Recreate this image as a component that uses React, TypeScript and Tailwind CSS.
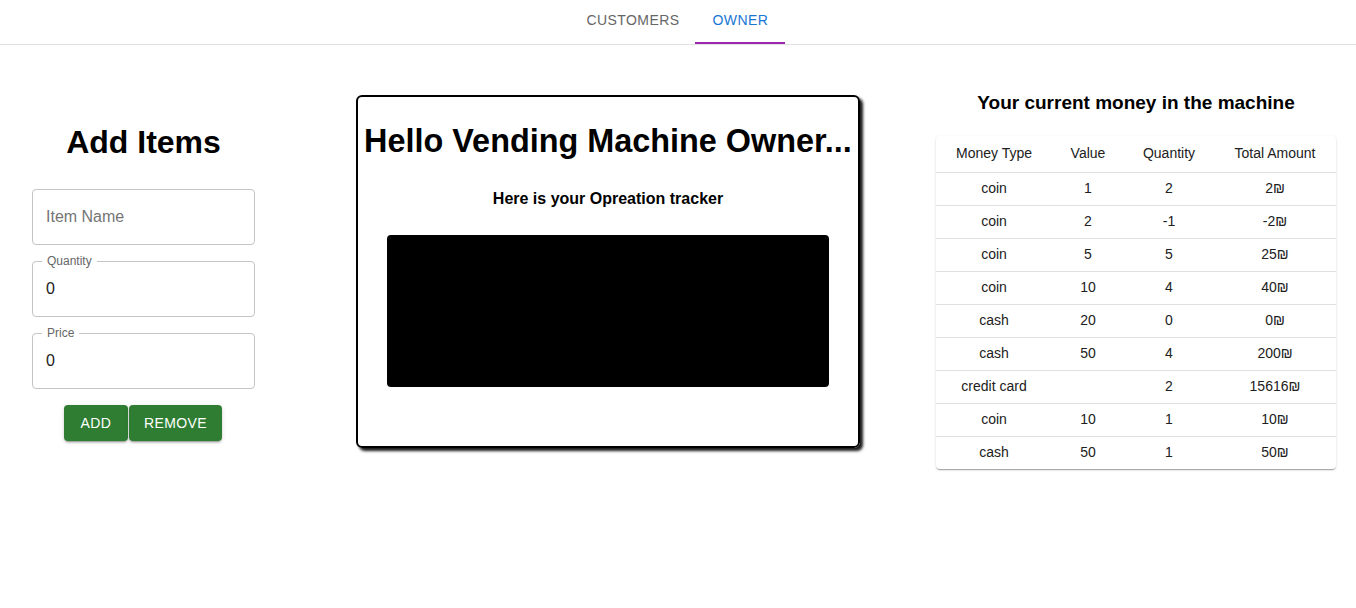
import React, { useState } from 'react';

type Tab = 'customers' | 'owner';

const money = [
    { type: 'coin', value: '1', qty: '2', total: '2₪' },
    { type: 'coin', value: '2', qty: '-1', total: '-2₪' },
    { type: 'coin', value: '5', qty: '5', total: '25₪' },
    { type: 'coin', value: '10', qty: '4', total: '40₪' },
    { type: 'cash', value: '20', qty: '0', total: '0₪' },
    { type: 'cash', value: '50', qty: '4', total: '200₪' },
    { type: 'credit card', value: '', qty: '2', total: '15616₪' },
    { type: 'coin', value: '10', qty: '1', total: '10₪' },
    { type: 'cash', value: '50', qty: '1', total: '50₪' },
];

function OutlinedField({ label, value, placeholder }: { label?: string; value?: string; placeholder?: string }) {
    return (
        <div className="relative h-[56px] w-[223px] rounded-[4px] border border-[#c4c4c4]">
            {label && (
                <span className="absolute left-[9px] top-[-8px] bg-white px-[5px] text-[12px] leading-[14px] text-[#666666]">
                    {label}
                </span>
            )}
            <input
                defaultValue={value}
                placeholder={placeholder}
                className="h-full w-full bg-transparent px-[13px] text-[16px] text-[#212121] placeholder-[#757575] outline-none"
            />
        </div>
    );
}

export default function App() {
    const [activeTab, setActiveTab] = useState<Tab>('owner');

    return (
        <div className="min-h-[608px] w-full bg-white font-['Liberation_Sans',Arial,sans-serif] text-black">
            {/* Tabs */}
            <div className="flex h-[45px] justify-center border-b border-[#e0e0e0]">
                <button
                    onClick={() => setActiveTab('customers')}
                    className={
                        activeTab === 'customers'
                            ? 'relative min-w-[90px] px-[16px] text-[14px] uppercase tracking-[0.4px] text-[#1976d2]'
                            : 'relative min-w-[90px] px-[16px] text-[14px] uppercase tracking-[0.4px] text-[#666666]'
                    }
                >
                    <span className="relative top-[-2px]">Customers</span>
                    {activeTab === 'customers' && <span className="absolute bottom-0 left-0 h-[2px] w-full bg-[#9c27b0]" />}
                </button>
                <button
                    onClick={() => setActiveTab('owner')}
                    className={
                        activeTab === 'owner'
                            ? 'relative min-w-[90px] px-[16px] text-[14px] uppercase tracking-[0.4px] text-[#1976d2]'
                            : 'relative min-w-[90px] px-[16px] text-[14px] uppercase tracking-[0.4px] text-[#666666]'
                    }
                >
                    <span className="relative top-[-2px]">Owner</span>
                    {activeTab === 'owner' && <span className="absolute bottom-0 left-0 h-[2px] w-full bg-[#9c27b0]" />}
                </button>
            </div>

            <div className="flex items-start pl-[32px]">
                {/* Add items */}
                <div className="mt-[79px] flex w-[223px] flex-col items-center">
                    <h1 className="text-[32px] font-bold leading-[37px]">Add Items</h1>
                    <div className="mt-[28px] flex flex-col gap-[16px]">
                        <OutlinedField placeholder="Item Name" />
                        <OutlinedField label="Quantity" value="0" />
                        <OutlinedField label="Price" value="0" />
                    </div>
                    <div className="mt-[16px] flex gap-[1px] pr-[1px]">
                        <button className="h-[36px] min-w-[64px] rounded-[4px] bg-[#2e7d32] px-[16px] text-[14px] font-medium uppercase tracking-[0.4px] text-white shadow-[0_3px_1px_-2px_rgba(0,0,0,0.2),0_2px_2px_0_rgba(0,0,0,0.14),0_1px_5px_0_rgba(0,0,0,0.12)]">
                            Add
                        </button>
                        <button className="h-[36px] min-w-[64px] rounded-[4px] bg-[#2e7d32] px-[15px] text-[14px] font-medium uppercase tracking-[0.4px] text-white shadow-[0_3px_1px_-2px_rgba(0,0,0,0.2),0_2px_2px_0_rgba(0,0,0,0.14),0_1px_5px_0_rgba(0,0,0,0.12)]">
                            Remove
                        </button>
                    </div>
                </div>

                {/* Operation tracker */}
                <div className="ml-[101px] mt-[50px] flex h-[353px] w-[504px] flex-col items-center rounded-[6px] border-2 border-black shadow-[3px_3px_3px_rgba(0,0,0,0.9)]">
                    <h1 className="mt-[26px] whitespace-nowrap text-[32.4px] font-bold leading-[37px]">Hello Vending Machine Owner...</h1>
                    <h4 className="mt-[29px] text-[16px] font-bold leading-[19px]">Here is your Opreation tracker</h4>
                    <div className="mt-[27px] h-[152px] w-[442px] rounded-[4px] bg-black" />
                </div>

                {/* Money table */}
                <div className="ml-[76px] mt-[46px] flex w-[400px] flex-col items-center">
                    <h3 className="text-[19px] font-bold leading-[23px]">Your current money in the machine</h3>
                    <div className="mt-[22px] w-full overflow-hidden rounded-[4px] bg-white shadow-[0_2px_1px_-1px_rgba(0,0,0,0.2),0_1px_1px_0_rgba(0,0,0,0.14),0_1px_3px_0_rgba(0,0,0,0.12)]">
                        <table className="w-full table-fixed border-collapse text-[14px] text-[#212121]">
                            <colgroup>
                                <col className="w-[116px]" />
                                <col className="w-[72px]" />
                                <col className="w-[90px]" />
                                <col className="w-[122px]" />
                            </colgroup>
                            <thead>
                                <tr className="h-[36px] border-b border-[#e0e0e0]">
                                    <th className="px-[4px] text-center font-normal">Money Type</th>
                                    <th className="px-[4px] text-center font-normal">Value</th>
                                    <th className="px-[4px] text-center font-normal">Quantity</th>
                                    <th className="px-[4px] text-center font-normal">Total Amount</th>
                                </tr>
                            </thead>
                            <tbody>
                                {money.map((row, i) => (
                                    <tr
                                        key={i}
                                        className={i === money.length - 1 ? 'h-[33px]' : 'h-[33px] border-b border-[#e0e0e0]'}
                                    >
                                        <td className="px-[4px] text-center">{row.type}</td>
                                        <td className="px-[4px] text-center">{row.value}</td>
                                        <td className="px-[4px] text-center">{row.qty}</td>
                                        <td className="px-[4px] text-center">{row.total}</td>
                                    </tr>
                                ))}
                            </tbody>
                        </table>
                    </div>
                </div>
            </div>
        </div>
    );
}
